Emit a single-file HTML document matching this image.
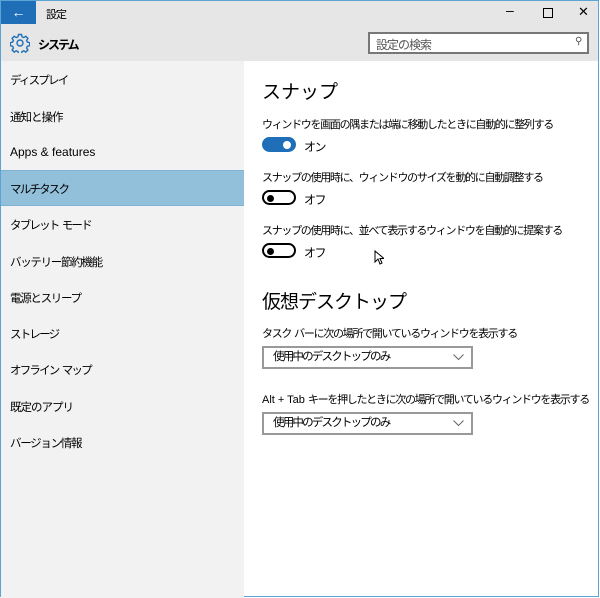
<!DOCTYPE html>
<html><head><meta charset="utf-8"><style>
*{margin:0;padding:0;box-sizing:border-box}
body{width:600px;height:598px;overflow:hidden;font-family:"Liberation Sans","Noto Sans CJK JP",sans-serif;color:#000;background:#fff}
.win{position:absolute;left:0;top:0;width:599px;height:597px;border:1px solid #5ea3d6;background:#fff}
.hdr{position:absolute;left:0;top:0;width:597px;height:60px;background:#e6e6e6}
.back{position:absolute;left:0;top:0;width:35px;height:23px;background:#1e6fb8;color:#fff;font-size:14px;text-align:center;line-height:22px}
.t{position:absolute;font-size:12px;white-space:nowrap}
.d{font-size:11px;letter-spacing:-1.3px}
.l{letter-spacing:0}
.side{position:absolute;left:0;top:60px;width:243px;height:537px;background:#f2f2f2}
.si{position:absolute;left:9px;font-size:11.5px;letter-spacing:-1.8px;white-space:nowrap}
.sel{position:absolute;left:0;top:169px;width:243px;height:36px;background:#92c0da;border-top:1px solid #7fb3d3;border-bottom:1px solid #7fb3d3}
.tog{position:absolute;left:261px;width:34px;height:15px;border-radius:8px}
.on{background:#1e6fb8}
.on::after{content:"";position:absolute;right:5px;top:3.5px;width:8px;height:8px;border-radius:50%;background:#fff}
.off{border:2px solid #000}
.off::after{content:"";position:absolute;left:3px;top:2.5px;width:7px;height:7px;border-radius:50%;background:#000}
.dd{position:absolute;left:261px;width:211px;height:23px;border:2px solid #999;background:#fff;font-size:11.5px;letter-spacing:-1.8px;padding-left:9px;line-height:19px}
.dd svg{position:absolute;right:7px;top:6px}
</style></head><body><div class="win">
<div class="hdr"></div>
<div class="back">&#8592;</div>
<div class="t" style="left:45px;top:5px;font-size:11px;letter-spacing:-1px">設定</div>
<div class="t" style="left:505px;top:1px;font-size:14px">&#8211;</div>
<div style="position:absolute;left:542px;top:7px;width:10px;height:10px;border:1px solid #000"></div>
<div class="t" style="left:577px;top:3px;font-size:13px">&#10005;</div>
<svg style="position:absolute;left:9px;top:32px" width="20" height="20" viewBox="0 0 20 20"><g fill="none" stroke="#1e6fb8" stroke-width="1.4"><circle cx="10" cy="10" r="3"/><path d="M8.5 1.5h3l.5 2.3 1.8.8 2-1.3 2.1 2.1-1.3 2 .8 1.8 2.3.5v3l-2.3.5-.8 1.8 1.3 2-2.1 2.1-2-1.3-1.8.8-.5 2.3h-3l-.5-2.3-1.8-.8-2 1.3-2.1-2.1 1.3-2-.8-1.8-2.3-.5v-3l2.3-.5.8-1.8-1.3-2 2.1-2.1 2 1.3 1.8-.8z"/></g></svg>
<div class="t" style="left:37px;top:35px;font-weight:bold;font-size:12px;letter-spacing:-2px">システム</div>
<div style="position:absolute;left:367px;top:31px;width:221px;height:22px;border:2px solid #777;background:#fff"></div>
<div class="t" style="left:375px;top:35px;color:#555;letter-spacing:-1px">設定の検索</div>
<div class="t" style="left:574px;top:35px;font-size:10px;color:#555">&#9906;</div>
<div class="side"></div>
<div class="sel"></div>
<div class="si" style="top:71px">ディスプレイ</div>
<div class="si" style="top:108px;letter-spacing:-1px">通知と操作</div>
<div class="si" style="top:144px;font-size:12px;letter-spacing:0">Apps &amp; features</div>
<div class="si" style="top:180px">マルチタスク</div>
<div class="si" style="top:216px">タブレット<span class="l"> </span>モード</div>
<div class="si" style="top:253px;letter-spacing:-1.3px">バッテリー節約機能</div>
<div class="si" style="top:289px;letter-spacing:-1.3px">電源とスリープ</div>
<div class="si" style="top:325px">ストレージ</div>
<div class="si" style="top:361px">オフライン<span class="l"> </span>マップ</div>
<div class="si" style="top:398px;letter-spacing:-1px">既定のアプリ</div>
<div class="si" style="top:434px;letter-spacing:-1.3px">バージョン情報</div>
<div class="t" style="left:261px;top:76px;font-size:19px">スナップ</div>
<div class="t d" style="left:261px;top:115px">ウィンドウを画面の隅または端に移動したときに自動的に整列する</div>
<div class="tog on" style="top:136px"></div><div class="t" style="left:303px;top:137px;letter-spacing:-1.5px">オン</div>
<div class="t d" style="left:261px;top:168px">スナップの使用時に、ウィンドウのサイズを動的に自動調整する</div>
<div class="tog off" style="top:189px"></div><div class="t" style="left:303px;top:190px;letter-spacing:-1.5px">オフ</div>
<div class="t d" style="left:261px;top:221px">スナップの使用時に、並べて表示するウィンドウを自動的に提案する</div>
<div class="tog off" style="top:242px"></div><div class="t" style="left:303px;top:243px;letter-spacing:-1.5px">オフ</div>
<svg style="position:absolute;left:373px;top:249px" width="10" height="15" viewBox="0 0 10 15"><path d="M1 1v11l3-3 2 5 2-1-2-4.5h4z" fill="#fff" stroke="#000" stroke-width="1"/></svg>
<div class="t" style="left:261px;top:286px;font-size:19px;letter-spacing:-1px">仮想デスクトップ</div>
<div class="t d" style="left:261px;top:324px">タスク<span class="l"> </span>バーに次の場所で開いているウィンドウを表示する</div>
<div class="dd" style="top:345px">使用中のデスクトップのみ<svg width="11" height="7"><path d="M0.5 0.5l5 5 5-5" fill="none" stroke="#666"/></svg></div>
<div class="t d" style="left:261px;top:390px"><span class="l">Alt + Tab </span>キーを押したときに次の場所で開いているウィンドウを表示する</div>
<div class="dd" style="top:411px">使用中のデスクトップのみ<svg width="11" height="7"><path d="M0.5 0.5l5 5 5-5" fill="none" stroke="#666"/></svg></div>
</div></body></html>
